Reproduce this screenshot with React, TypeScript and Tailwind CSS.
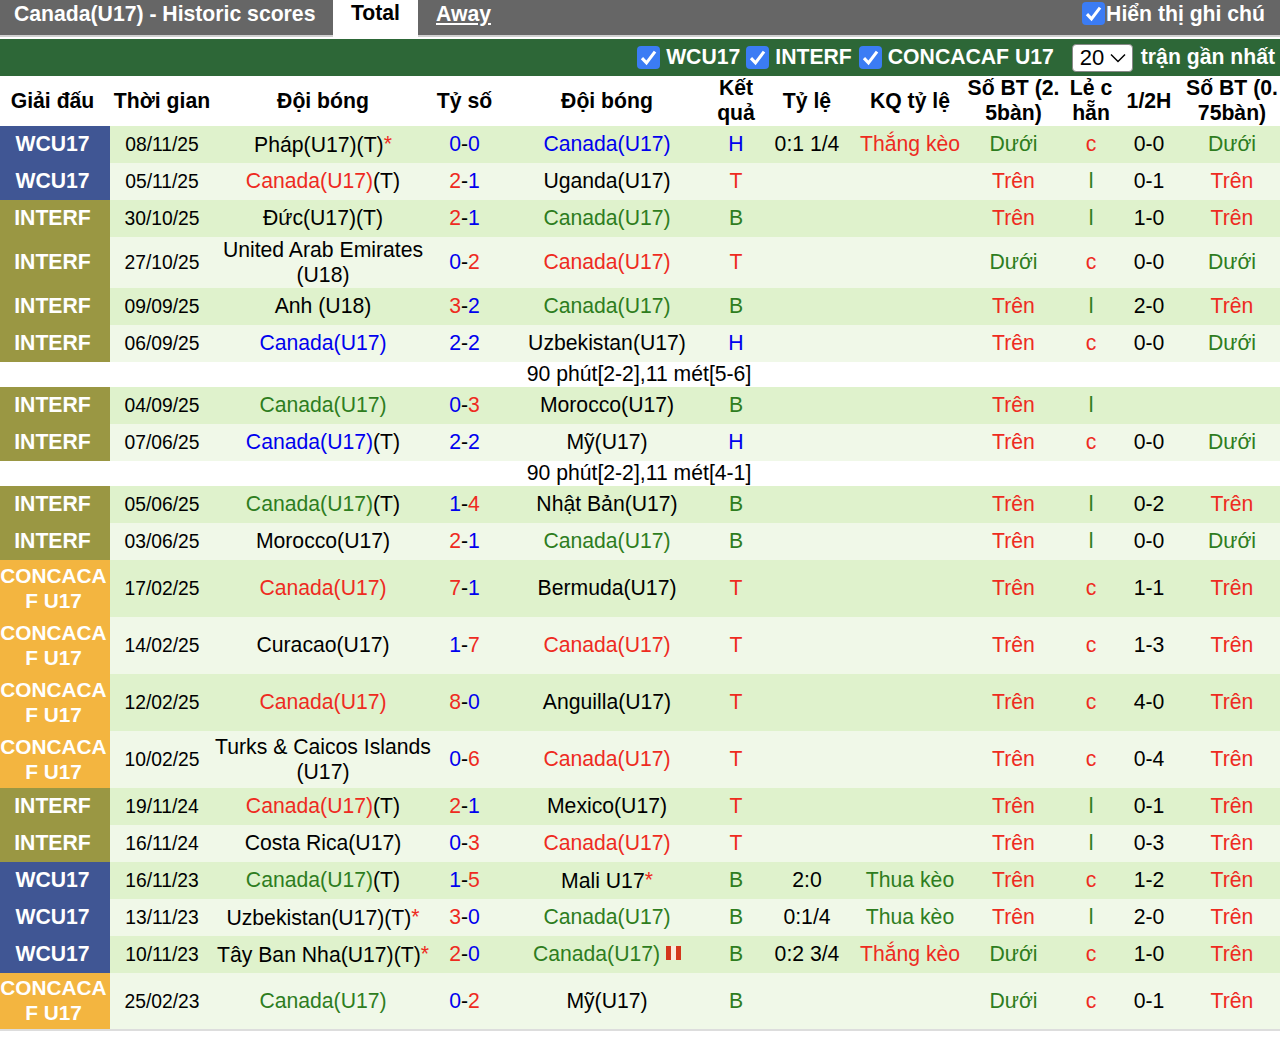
import type { ReactNode } from "react";

const RED = "text-[#ee2b1f]";
const BLUE = "text-[#0000ee]";
const GREEN = "text-[#2e7d1e]";
const BLACK = "text-black";

type Color = "r" | "b" | "g" | "k";
const colors: Record<Color, string> = { r: RED, b: BLUE, g: GREEN, k: BLACK };

const leagues = {
  W: { name: "WCU17", bg: "bg-[#405694]", box: "w-[105px]" },
  I: { name: "INTERF", bg: "bg-[#9a9743]", box: "w-[105px]" },
  C: { name: "CONCACAF U17", bg: "bg-[#f3b540]", box: "w-[107px] text-[20.8px]" },
};

interface Match {
  lg: keyof typeof leagues;
  date: string;
  home: string;
  hc: Color;
  ht?: boolean; // (T) suffix
  star?: boolean;
  score: string;
  s: [Color, Color];
  away: string;
  ac: Color;
  astar?: boolean;
  flag?: boolean;
  res: "H" | "T" | "B";
  odds?: string;
  kq?: string;
  bt: string;
  lc: string;
  half?: string;
  bt2?: string;
  note?: string;
  h: string;
}

const matches: Match[] = [
  { lg: "W", date: "08/11/25", home: "Pháp(U17)", hc: "k", ht: true, star: true, score: "0-0", s: ["b", "b"], away: "Canada(U17)", ac: "b", res: "H", odds: "0:1 1/4", kq: "Thắng kèo", bt: "Dưới", lc: "c", half: "0-0", bt2: "Dưới", h: "h-[37px]" },
  { lg: "W", date: "05/11/25", home: "Canada(U17)", hc: "r", ht: true, score: "2-1", s: ["r", "b"], away: "Uganda(U17)", ac: "k", res: "T", bt: "Trên", lc: "l", half: "0-1", bt2: "Trên", h: "h-[37px]" },
  { lg: "I", date: "30/10/25", home: "Đức(U17)", hc: "k", ht: true, score: "2-1", s: ["r", "b"], away: "Canada(U17)", ac: "g", res: "B", bt: "Trên", lc: "l", half: "1-0", bt2: "Trên", h: "h-[37px]" },
  { lg: "I", date: "27/10/25", home: "United Arab Emirates (U18)", hc: "k", score: "0-2", s: ["b", "r"], away: "Canada(U17)", ac: "r", res: "T", bt: "Dưới", lc: "c", half: "0-0", bt2: "Dưới", h: "h-[51px]" },
  { lg: "I", date: "09/09/25", home: "Anh (U18)", hc: "k", score: "3-2", s: ["r", "b"], away: "Canada(U17)", ac: "g", res: "B", bt: "Trên", lc: "l", half: "2-0", bt2: "Trên", h: "h-[37px]" },
  { lg: "I", date: "06/09/25", home: "Canada(U17)", hc: "b", score: "2-2", s: ["b", "b"], away: "Uzbekistan(U17)", ac: "k", res: "H", bt: "Trên", lc: "c", half: "0-0", bt2: "Dưới", note: "90 phút[2-2],11 mét[5-6]", h: "h-[37px]" },
  { lg: "I", date: "04/09/25", home: "Canada(U17)", hc: "g", score: "0-3", s: ["b", "r"], away: "Morocco(U17)", ac: "k", res: "B", bt: "Trên", lc: "l", h: "h-[37px]" },
  { lg: "I", date: "07/06/25", home: "Canada(U17)", hc: "b", ht: true, score: "2-2", s: ["b", "b"], away: "Mỹ(U17)", ac: "k", res: "H", bt: "Trên", lc: "c", half: "0-0", bt2: "Dưới", note: "90 phút[2-2],11 mét[4-1]", h: "h-[37px]" },
  { lg: "I", date: "05/06/25", home: "Canada(U17)", hc: "g", ht: true, score: "1-4", s: ["b", "r"], away: "Nhật Bản(U17)", ac: "k", res: "B", bt: "Trên", lc: "l", half: "0-2", bt2: "Trên", h: "h-[37px]" },
  { lg: "I", date: "03/06/25", home: "Morocco(U17)", hc: "k", score: "2-1", s: ["r", "b"], away: "Canada(U17)", ac: "g", res: "B", bt: "Trên", lc: "l", half: "0-0", bt2: "Dưới", h: "h-[37px]" },
  { lg: "C", date: "17/02/25", home: "Canada(U17)", hc: "r", score: "7-1", s: ["r", "b"], away: "Bermuda(U17)", ac: "k", res: "T", bt: "Trên", lc: "c", half: "1-1", bt2: "Trên", h: "h-[57px]" },
  { lg: "C", date: "14/02/25", home: "Curacao(U17)", hc: "k", score: "1-7", s: ["b", "r"], away: "Canada(U17)", ac: "r", res: "T", bt: "Trên", lc: "c", half: "1-3", bt2: "Trên", h: "h-[57px]" },
  { lg: "C", date: "12/02/25", home: "Canada(U17)", hc: "r", score: "8-0", s: ["r", "b"], away: "Anguilla(U17)", ac: "k", res: "T", bt: "Trên", lc: "c", half: "4-0", bt2: "Trên", h: "h-[57px]" },
  { lg: "C", date: "10/02/25", home: "Turks & Caicos Islands (U17)", hc: "k", score: "0-6", s: ["b", "r"], away: "Canada(U17)", ac: "r", res: "T", bt: "Trên", lc: "c", half: "0-4", bt2: "Trên", h: "h-[57px]" },
  { lg: "I", date: "19/11/24", home: "Canada(U17)", hc: "r", ht: true, score: "2-1", s: ["r", "b"], away: "Mexico(U17)", ac: "k", res: "T", bt: "Trên", lc: "l", half: "0-1", bt2: "Trên", h: "h-[37px]" },
  { lg: "I", date: "16/11/24", home: "Costa Rica(U17)", hc: "k", score: "0-3", s: ["b", "r"], away: "Canada(U17)", ac: "r", res: "T", bt: "Trên", lc: "l", half: "0-3", bt2: "Trên", h: "h-[37px]" },
  { lg: "W", date: "16/11/23", home: "Canada(U17)", hc: "g", ht: true, score: "1-5", s: ["b", "r"], away: "Mali U17", ac: "k", astar: true, res: "B", odds: "2:0", kq: "Thua kèo", bt: "Trên", lc: "c", half: "1-2", bt2: "Trên", h: "h-[37px]" },
  { lg: "W", date: "13/11/23", home: "Uzbekistan(U17)", hc: "k", ht: true, star: true, score: "3-0", s: ["r", "b"], away: "Canada(U17)", ac: "g", res: "B", odds: "0:1/4", kq: "Thua kèo", bt: "Trên", lc: "l", half: "2-0", bt2: "Trên", h: "h-[37px]" },
  { lg: "W", date: "10/11/23", home: "Tây Ban Nha(U17)", hc: "k", ht: true, star: true, score: "2-0", s: ["r", "b"], away: "Canada(U17)", ac: "g", flag: true, res: "B", odds: "0:2 3/4", kq: "Thắng kèo", bt: "Dưới", lc: "c", half: "1-0", bt2: "Trên", h: "h-[37px]" },
  { lg: "C", date: "25/02/23", home: "Canada(U17)", hc: "g", score: "0-2", s: ["b", "r"], away: "Mỹ(U17)", ac: "k", res: "B", bt: "Dưới", lc: "c", half: "0-1", bt2: "Trên", h: "h-[57px]" },
];

const resColor = { H: BLUE, T: RED, B: GREEN };
const kqColor = (k?: string) => (k === "Thua kèo" ? GREEN : RED);
const btColor = (b: string) => (b === "Dưới" ? GREEN : RED);

function Check() {
  return (
    <span className="flex h-[23px] w-[23px] shrink-0 items-center justify-center rounded-[4px] bg-[#3b7cf4]">
      <svg viewBox="0 0 16 16" className="h-[19px] w-[19px]" fill="none" stroke="white" strokeWidth="2.6">
        <path d="M2.5 8.5 L6.3 12.5 L13.5 3" />
      </svg>
    </span>
  );
}

function Star() {
  return <span className="align-[1px] text-[#ee2b1f]">*</span>;
}

function Flag() {
  return (
    <span className="ml-[6px] inline-flex h-[14px] w-[15px] justify-center bg-[#d4371c] align-[1px]">
      <span className="h-full w-[5px] bg-[#fbe9dc]" />
    </span>
  );
}

// table text sits 1px above the middle of its cell
function Up({ children }: { children?: ReactNode }) {
  return <div className="-mt-[2px]">{children}</div>;
}

export default function App() {
  return (
    <div className="w-[1280px] overflow-hidden bg-white font-['Liberation_Sans',Arial,sans-serif] text-[21.2px] leading-[25px] text-black">
      {/* tabs */}
      <div className="flex h-[37px] items-start justify-between border-b-2 border-[#d0d0d0] bg-[#666666] font-bold text-white">
        <div className="flex">
          <div className="w-[333px] pl-[14px] pt-[1px]">Canada(U17) - Historic scores</div>
          <div className="h-[37px] w-[85px] bg-white text-center text-black">Total</div>
          <div className="ml-[18px] pt-[1px] underline">Away</div>
        </div>
        <div className="flex items-center gap-[1px] pr-[15px] pt-[1px]">
          <Check />
          <span>Hiển thị ghi chú</span>
        </div>
      </div>

      {/* filters */}
      <div className="mt-[2px] flex h-[37px] items-center justify-end bg-[#2d6737] pr-[5px] font-bold text-white">
        <Check />
        <span className="ml-[6px] pb-[2px]">WCU17</span>
        <span className="ml-[6px]"><Check /></span>
        <span className="ml-[6px] pb-[2px]">INTERF</span>
        <span className="ml-[7px]"><Check /></span>
        <span className="ml-[6px] pb-[2px]">CONCACAF U17</span>
        <div className="ml-[18px] flex h-[28px] w-[61px] items-center gap-[6px] rounded-[4px] border border-[#888888] bg-white pl-[7px] text-[22px] font-normal text-black">
          20
          <svg viewBox="0 0 16 10" className="h-[10px] w-[16px]" fill="none" stroke="black" strokeWidth="1.5">
            <path d="M1 1.5 L8 8.5 L15 1.5" />
          </svg>
        </div>
        <span className="ml-[8px] pb-[2px]">trận gần nhất</span>
      </div>

      <table className="w-[1280px] table-fixed border-collapse border-b-2 border-[#dddddd] text-center">
        <colgroup>
          <col className="w-[110px]" />
          <col className="w-[104px]" />
          <col className="w-[218px]" />
          <col className="w-[65px]" />
          <col className="w-[220px]" />
          <col className="w-[38px]" />
          <col className="w-[104px]" />
          <col className="w-[102px]" />
          <col className="w-[105px]" />
          <col className="w-[50px]" />
          <col className="w-[66px]" />
          <col className="w-[98px]" />
        </colgroup>
        <thead>
          <tr className="h-[50px] break-all font-bold">
            <th><div className="-mt-[2px] w-[105px]">Giải đấu</div></th>
            <th><Up>Thời gian</Up></th>
            <th><Up>Đội bóng</Up></th>
            <th><Up>Tỷ số</Up></th>
            <th><Up>Đội bóng</Up></th>
            <th><Up>Kết quả</Up></th>
            <th><Up>Tỷ lệ</Up></th>
            <th><Up>KQ tỷ lệ</Up></th>
            <th className="px-[2px]"><Up>Số BT (2.5bàn)</Up></th>
            <th><Up>Lẻ c hẵn</Up></th>
            <th><Up>1/2H</Up></th>
            <th className="pl-[3px] pr-[1px]"><Up>Số BT (0.75bàn)</Up></th>
          </tr>
        </thead>
        <tbody>
          {matches.flatMap((m, i) => {
            const lg = leagues[m.lg];
            const row = (
              <tr key={m.date + m.home} className={`${m.h} ${i % 2 === 0 ? "bg-[#dff2cc]" : "bg-[#f0f8e8]"}`}>
                <td className={`${lg.bg} break-all font-bold text-white`}>
                  <div className={`-mt-[2px] ${lg.box}`}>{lg.name}</div>
                </td>
                <td className="text-[19.3px]">{m.date}</td>
                <td className="px-[1px]">
                  <Up>
                    <span className={colors[m.hc]}>{m.home}</span>
                    {m.ht && "(T)"}
                    {m.star && <Star />}
                  </Up>
                </td>
                <td>
                  <Up>
                    <span className={colors[m.s[0]]}>{m.score[0]}</span>-<span className={colors[m.s[1]]}>{m.score[2]}</span>
                  </Up>
                </td>
                <td>
                  <Up>
                    <span className={colors[m.ac]}>{m.away}</span>
                    {m.astar && <Star />}
                    {m.flag && <Flag />}
                  </Up>
                </td>
                <td className={resColor[m.res]}><Up>{m.res}</Up></td>
                <td><Up>{m.odds}</Up></td>
                <td className={kqColor(m.kq)}><Up>{m.kq}</Up></td>
                <td className={btColor(m.bt)}><Up>{m.bt}</Up></td>
                <td className={m.lc === "c" ? RED : GREEN}><Up>{m.lc}</Up></td>
                <td><Up>{m.half}</Up></td>
                <td className={`pl-[2px] ${m.bt2 ? btColor(m.bt2) : ""}`}><Up>{m.bt2}</Up></td>
              </tr>
            );
            if (!m.note) return [row];
            return [
              row,
              <tr key={m.note} className="h-[25px] bg-white">
                <td colSpan={12} className="pr-[2px]"><Up>{m.note}</Up></td>
              </tr>,
            ];
          })}
        </tbody>
      </table>
    </div>
  );
}
